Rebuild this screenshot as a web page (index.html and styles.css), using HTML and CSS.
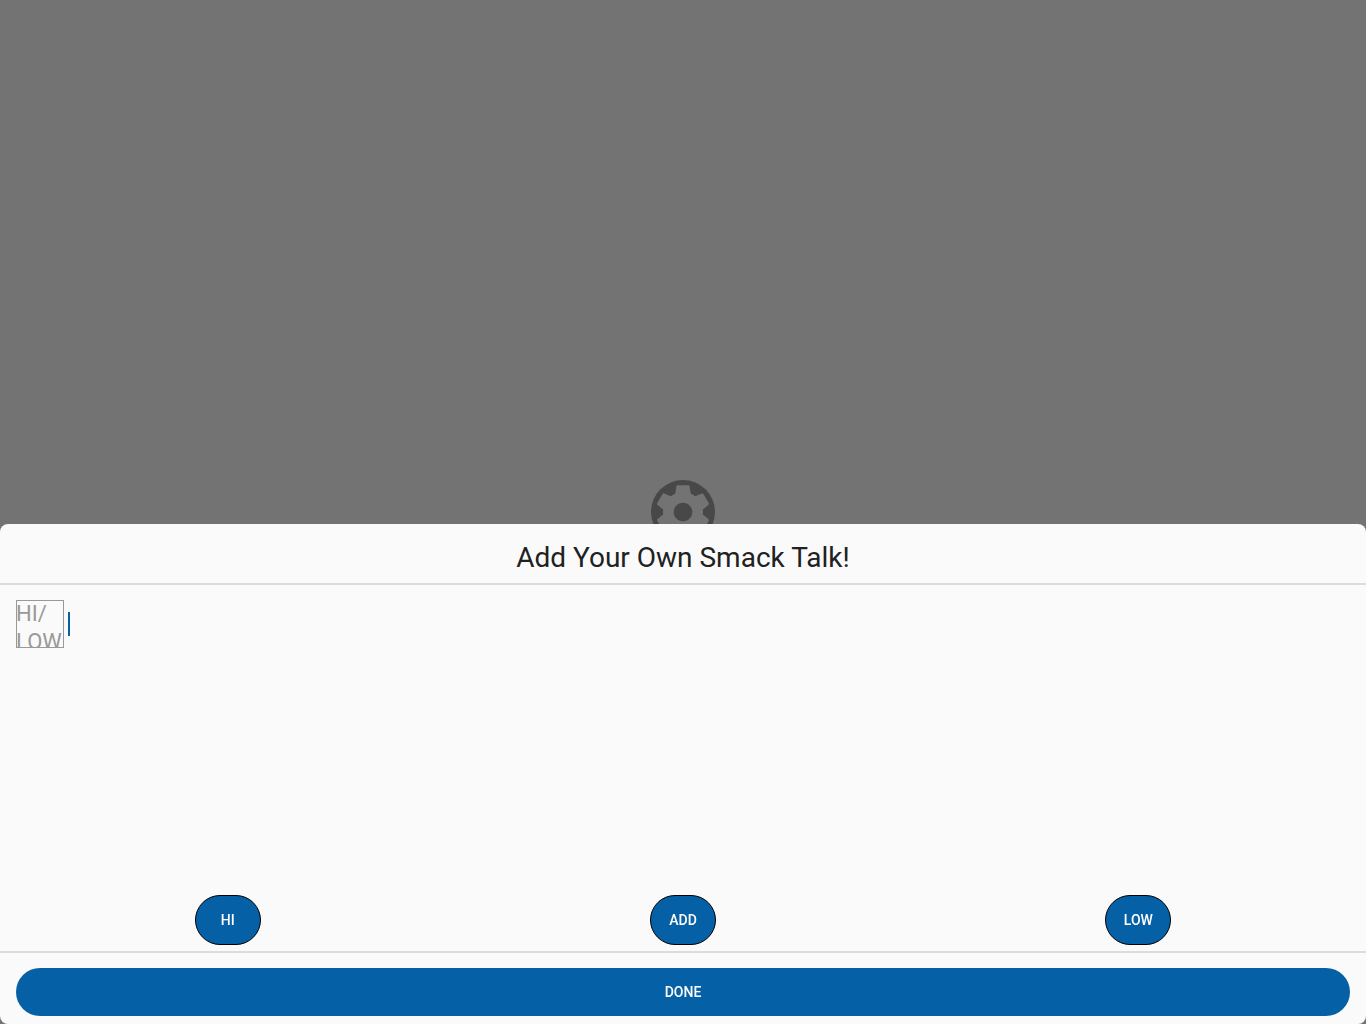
FILE: index.html
```html
<!DOCTYPE html>
<html lang="en">
<head>
<meta charset="utf-8">
<meta name="viewport" content="width=device-width, initial-scale=1">
<title>Add Your Own Smack Talk!</title>
<link rel="stylesheet" href="styles.css">
</head>
<body>
<div class="page">
  <button class="settings" type="button" aria-label="Settings">
    <svg class="settings-icon" viewBox="0 0 24 24" aria-hidden="true">
      <circle cx="12" cy="12" r="12" fill="#484848"/>
      <path fill="#737373" d="M19.43 12.98c.04-.32.07-.64.07-.98s-.03-.66-.07-.98l2.11-1.65c.19-.15.24-.42.12-.64l-2-3.46c-.12-.22-.39-.3-.61-.22l-2.49 1c-.52-.4-1.08-.73-1.69-.98l-.38-2.65C14.46 2.18 14.25 2 14 2h-4c-.25 0-.46.18-.49.42l-.38 2.65c-.61.25-1.17.59-1.69.98l-2.49-1c-.23-.09-.49 0-.61.22l-2 3.46c-.13.22-.07.49.12.64l2.11 1.65c-.04.32-.07.65-.07.98s.03.66.07.98l-2.11 1.65c-.19.15-.24.42-.12.64l2 3.46c.12.22.39.3.61.22l2.49-1c.52.4 1.08.73 1.69.98l.38 2.65c.03.24.24.42.49.42h4c.25 0 .46-.18.49-.42l.38-2.65c.61-.25 1.17-.59 1.69-.98l2.49 1c.23.09.49 0 .61-.22l2-3.46c.12-.22.07-.49-.12-.64l-2.11-1.65zM12 15.5c-1.93 0-3.5-1.57-3.5-3.5s1.57-3.5 3.5-3.5 3.5 1.57 3.5 3.5-1.57 3.5-3.5 3.5z"/>
    </svg>
  </button>
</div>
<section class="sheet" role="dialog" aria-labelledby="title">
  <header class="sheet-header">
    <h1 class="title" id="title">Add Your Own Smack Talk!</h1>
  </header>
  <div class="sheet-body">
    <div class="entry">
      <label class="token" for="talk">HI/<br>LOW</label>
      <span class="caret"></span>
      <input class="talk" id="talk" type="text">
    </div>
    <div class="actions">
      <div class="action"><button class="pill" type="button">HI</button></div>
      <div class="action"><button class="pill" type="button">ADD</button></div>
      <div class="action"><button class="pill" type="button">LOW</button></div>
    </div>
  </div>
  <footer class="sheet-footer">
    <button class="done" type="button">DONE</button>
  </footer>
</section>
</body>
</html>
```
FILE: styles.css
```css
* {
  box-sizing: border-box;
}

body {
  margin: 0;
  background: #737373;
  color: #212121;
  font-family: Roboto, sans-serif;
}

button,
input {
  font-family: inherit;
}

.page {
  display: flex;
  align-items: center;
  justify-content: center;
  min-height: 100vh;
}

.settings {
  padding: 0;
  border: 0;
  background: none;
}

.settings-icon {
  display: block;
  width: 64px;
  height: 64px;
}

/* Bottom sheet laid over the page */
.sheet {
  position: fixed;
  right: 0;
  bottom: 0;
  left: 0;
  display: flex;
  flex-direction: column;
  min-height: 500px;
  border-radius: 8px;
  background: #fafafa;
}

.sheet-header {
  padding: 18px 16px 9px;
  border-bottom: 2px solid #dcdcdc;
}

.title {
  margin: 0;
  font-size: 28px;
  font-weight: 400;
  line-height: 32px;
  text-align: center;
}

.sheet-body {
  display: flex;
  flex: 1;
  flex-direction: column;
  justify-content: space-between;
  padding: 15px 0 6px;
}

.entry {
  display: flex;
  align-items: center;
  padding: 0 16px;
}

/* The second line runs past the frame and is clipped by it */
.token {
  width: 48px;
  height: 48px;
  overflow: hidden;
  box-shadow: inset 0 0 0 1px #999;
  color: #999;
  font-size: 22px;
  line-height: 28px;
}

.caret {
  width: 2px;
  height: 24px;
  margin-left: 4px;
  background: #0560a6;
}

.talk {
  flex: 1;
  height: 48px;
  padding: 0;
  border: 0;
  outline: 0;
  background: transparent;
  color: inherit;
  font-size: 22px;
}

.actions {
  display: flex;
}

.action {
  display: flex;
  flex: 1;
  justify-content: center;
}

.pill,
.done {
  background: #0560a6;
  color: #fff;
  font-size: 14px;
  font-weight: 500;
}

.pill {
  width: 66px;
  height: 50px;
  padding: 0;
  border: 1px solid #000;
  border-radius: 25px;
}

.sheet-footer {
  padding: 15px 16px 8px;
  border-top: 2px solid #dcdcdc;
}

.done {
  display: block;
  width: 100%;
  height: 48px;
  border: 0;
  border-radius: 24px;
}
```
